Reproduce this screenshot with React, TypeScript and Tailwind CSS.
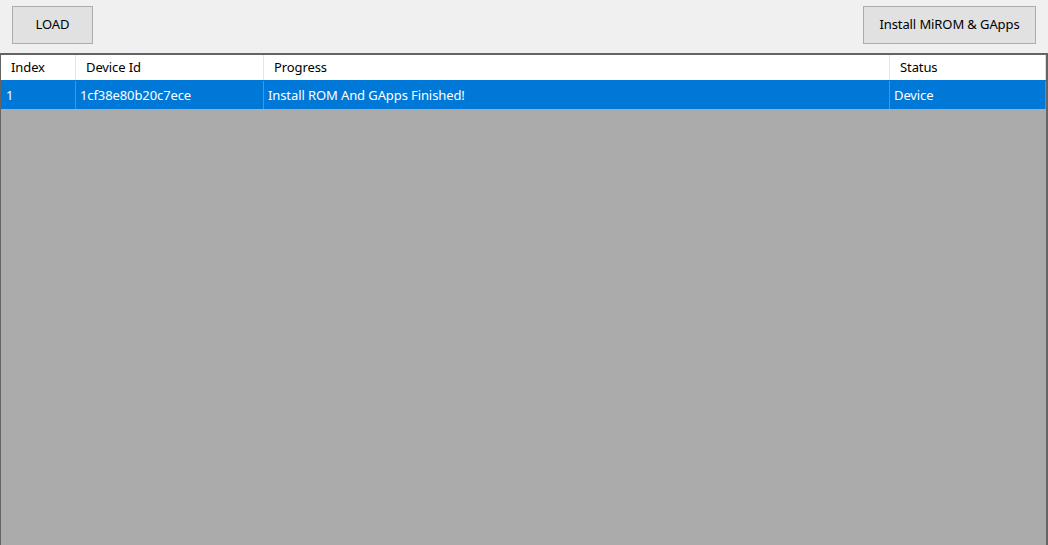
const font = { fontFamily: '"Noto Sans", "Open Sans", sans-serif' };

const cols = [
  { name: 'Index', value: '1', w: 'w-[75px]' },
  { name: 'Device Id', value: '1cf38e80b20c7ece', w: 'w-[188px]' },
  { name: 'Progress', value: 'Install ROM And GApps Finished!', w: 'w-[626px]' },
  { name: 'Status', value: 'Device', w: 'flex-1' },
];

export default function App() {
  return (
    <div className="w-[1048px] h-[545px] bg-[#f0f0f0] flex flex-col overflow-hidden text-[13px] tracking-[-0.1px]" style={font}>
      {/* toolbar */}
      <div className="h-[53px] flex items-start justify-between pt-[6px] px-[12px]">
        <button className="w-[81px] h-[38px] bg-[#e1e1e1] border border-[#adadad] text-black">
          LOAD
        </button>
        <button className="w-[173px] h-[38px] bg-[#e1e1e1] border border-[#adadad] text-black">
          Install MiROM &amp; GApps
        </button>
      </div>

      {/* grid */}
      <div className="flex-1 flex flex-col bg-[#ababab] border-t-2 border-l border-r-2 border-[#646464]">
        <div className="h-[25px] flex bg-white border-r border-[#e0e0e0]">
          {cols.map((c) => (
            <div
              key={c.name}
              className={`${c.w} h-full flex items-center pl-[10px] pt-[1px] border-r border-[#e5e5e5] last:border-r-0 text-black`}
            >
              {c.name}
            </div>
          ))}
        </div>
        <div className="h-[29px] flex bg-[#0078d7] border-t border-[#0078d7]">
          {cols.map((c, i) => (
            <div
              key={c.name}
              className={`${c.w} h-full flex items-center ${i === 0 ? 'pl-[5px]' : 'pl-[4px]'} pt-[2px] border-r border-[#5a8fc4] text-white`}
            >
              {c.value}
            </div>
          ))}
        </div>
      </div>
    </div>
  );
}
